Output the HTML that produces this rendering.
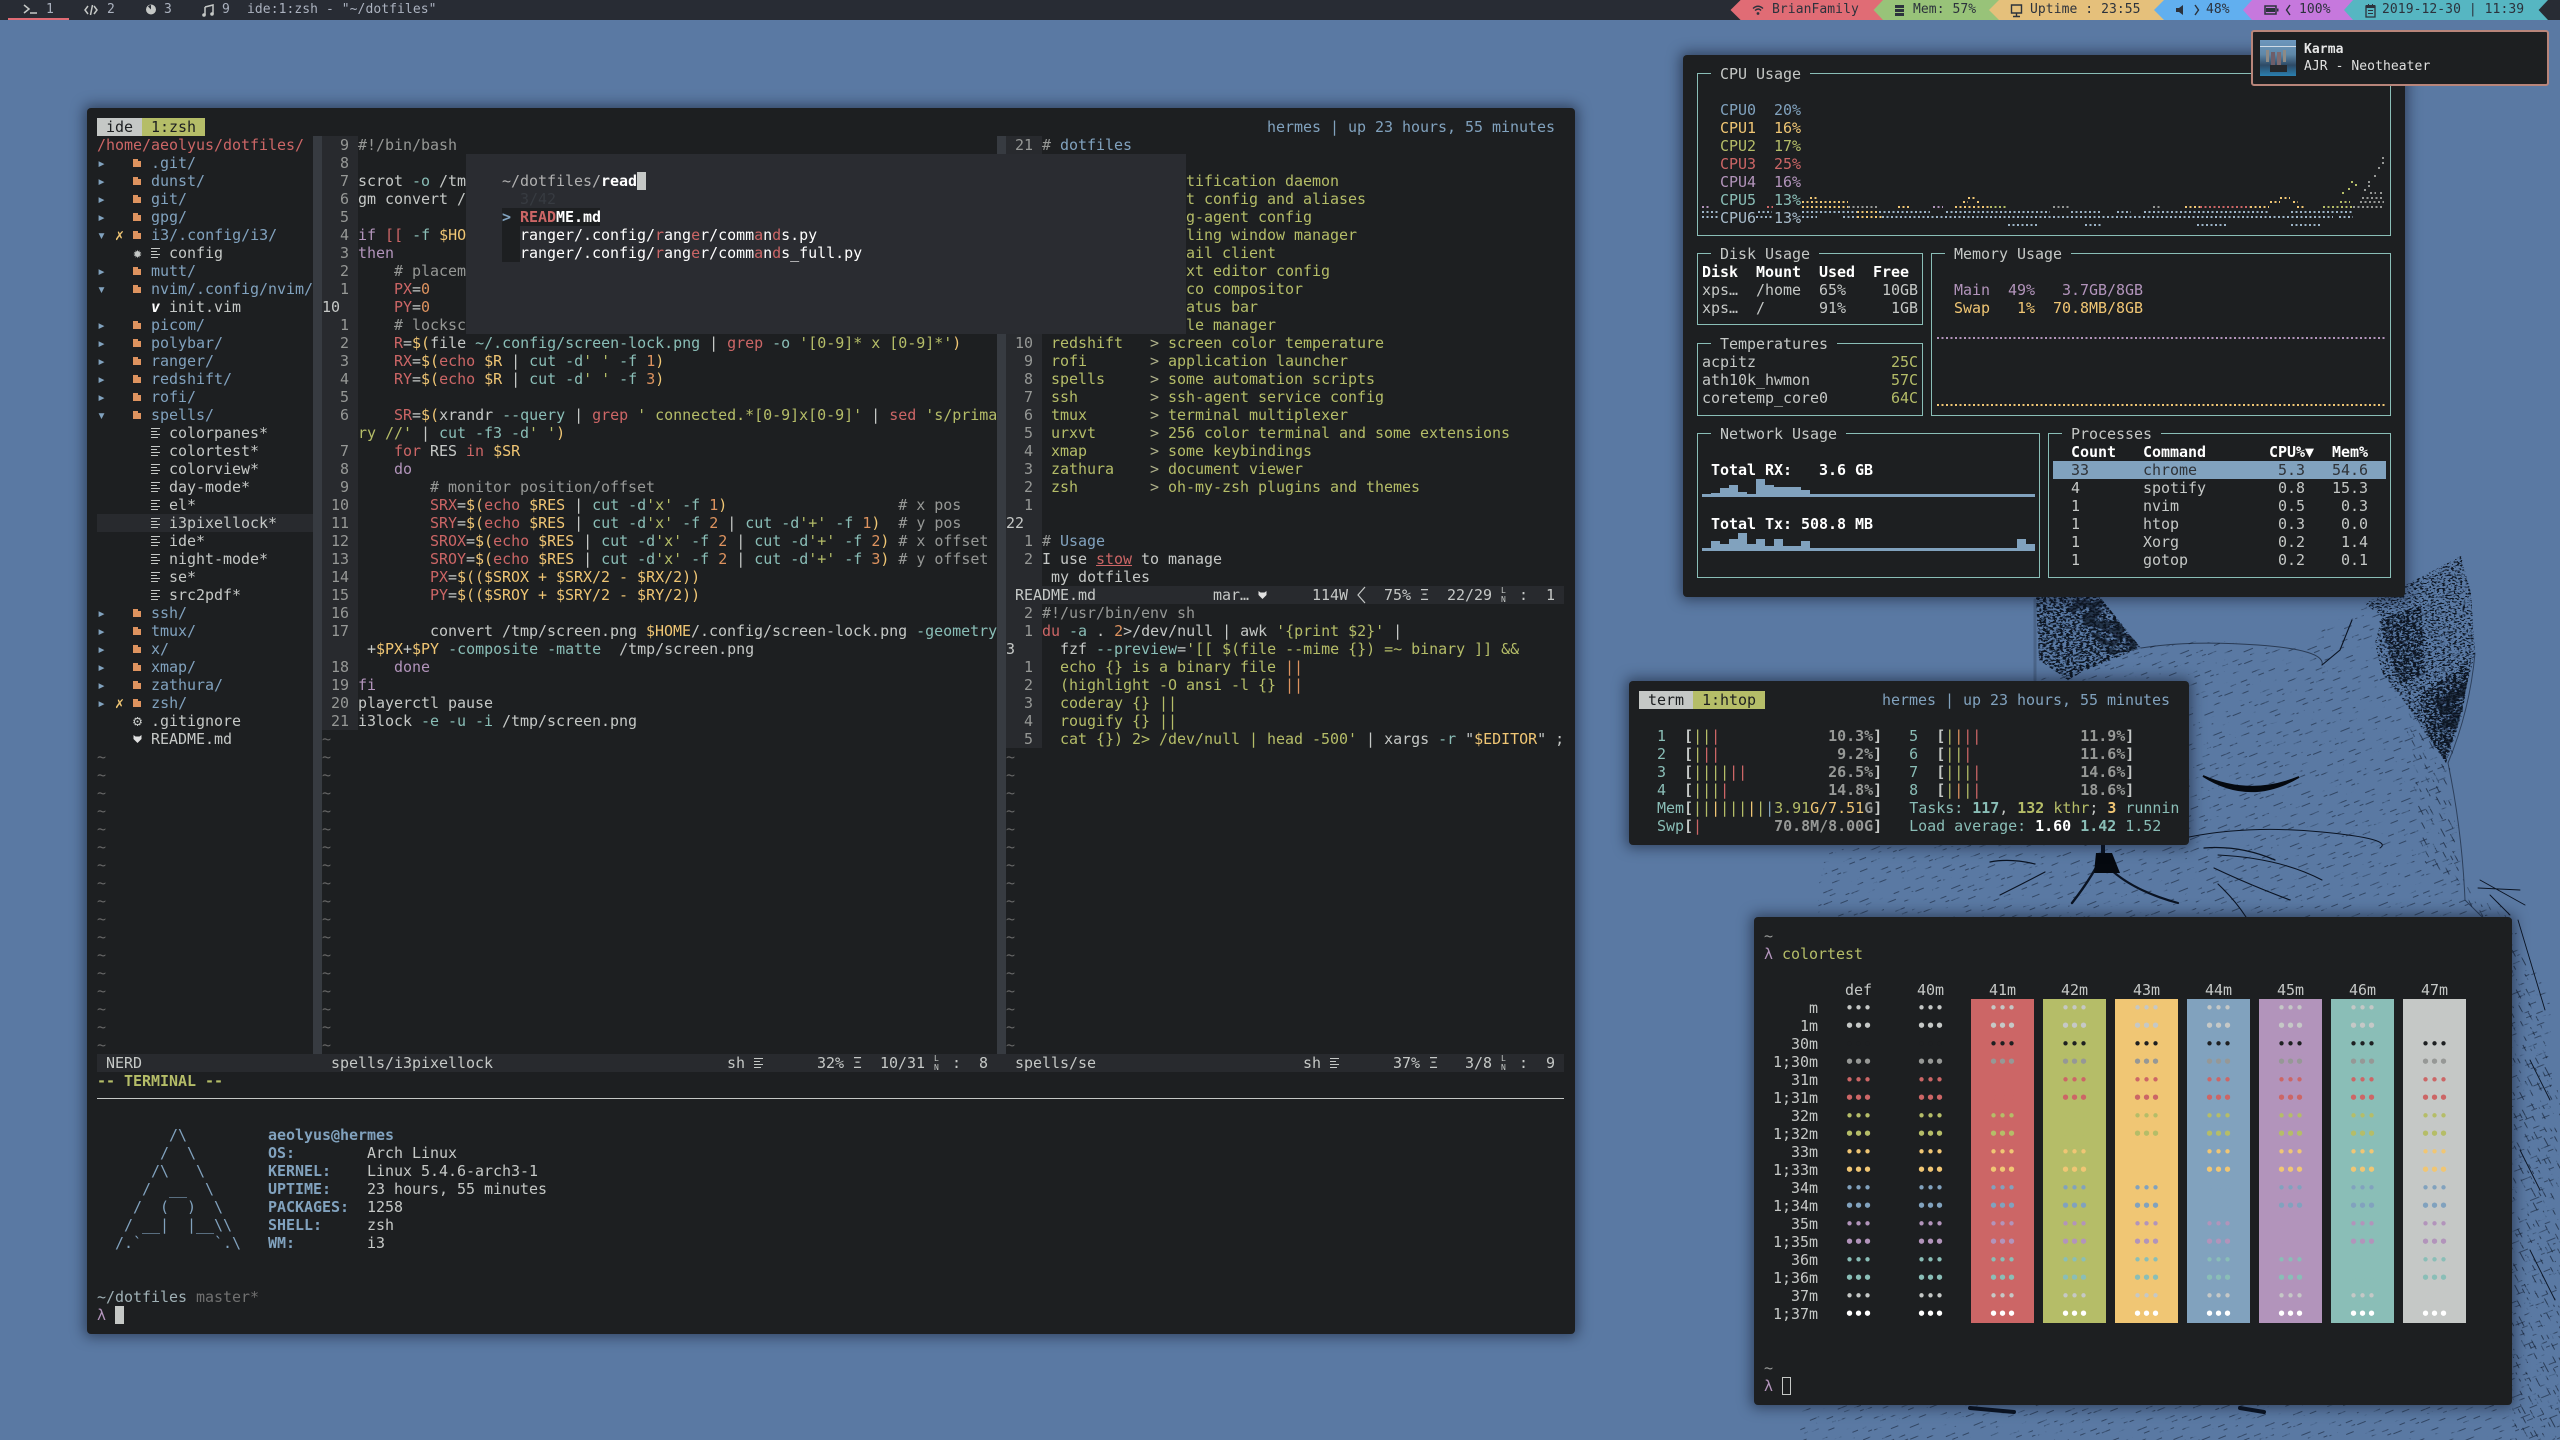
<!DOCTYPE html>
<html><head><meta charset="utf-8"><title>desktop</title>
<style>
html,body{margin:0;padding:0}
body{width:2560px;height:1440px;overflow:hidden;position:relative;background:#5a79a3;color:#c5c8c6;font:15px/18px "DejaVu Sans Mono","Liberation Mono",monospace;letter-spacing:-.03px}
pre,.t{position:absolute;margin:0;white-space:pre;font:inherit;letter-spacing:inherit}
b.t{font-weight:bold}
svg{position:absolute;left:0;top:0}
.w{position:absolute;background:#1d1f21;border-radius:4px;box-shadow:0 0 13px 3px rgba(12,18,34,.5)}
.x{position:absolute}
i{font-style:normal}
.r{color:#cc6666}.g{color:#b5bd68}.y{color:#f0c674}.b{color:#81a2be}.m{color:#b294bb}.c{color:#8abeb7}.o{color:#de935f}.k{color:#969896}.W{color:#fff}.l{color:#c5c8c6}.e{color:#1d1f21}
b{font-weight:bold}
.f{display:inline-block;width:9px;height:18px;vertical-align:top;background:linear-gradient(#de935f,#de935f) 0 5px/5px 2px no-repeat,linear-gradient(#de935f,#de935f) 0 7px/8px 6px no-repeat}
.fi{display:inline-block;width:9px;height:18px;vertical-align:top;background:linear-gradient(#c5c8c6,#c5c8c6) 0 4px/9px 1px no-repeat,linear-gradient(#c5c8c6,#c5c8c6) 0 7px/6px 1px no-repeat,linear-gradient(#c5c8c6,#c5c8c6) 0 10px/9px 1px no-repeat,linear-gradient(#c5c8c6,#c5c8c6) 0 13px/7px 1px no-repeat}
.s{display:inline-block;width:9px;text-align:center;line-height:18px;height:18px;vertical-align:top}
.d{color:#81a2be}
.tl{color:#666}
.ln{font-size:8px;line-height:9px}
.bx{position:absolute;border:1px solid #8abeb7;box-sizing:border-box}
.bt{position:absolute;background:#1d1f21;white-space:pre}
.bar{font-size:13px;line-height:20px;letter-spacing:.07px;color:#abb2bf}
.pb{font-size:13px;line-height:20px;letter-spacing:.07px;color:#2c323c}
</style></head><body>

<svg width="2560" height="1440" viewBox="0 0 2560 1440">
<defs>
<filter id="st" x="0" y="0" width="100%" height="100%"><feTurbulence type="fractalNoise" baseFrequency=".3 .55" numOctaves="2" seed="4"/><feColorMatrix values="0 0 0 0 0 0 0 0 0 0 0 0 0 0 0 9 0 0 0 -4.100"/><feComposite in="SourceGraphic" operator="in"/></filter>
<filter id="st3" x="0" y="0" width="100%" height="100%"><feTurbulence type="fractalNoise" baseFrequency=".35 .6" numOctaves="2" seed="11"/><feColorMatrix values="0 0 0 0 0 0 0 0 0 0 0 0 0 0 0 10 0 0 0 -5.300"/><feComposite in="SourceGraphic" operator="in"/></filter>
<filter id="st2" x="0" y="0" width="100%" height="100%"><feTurbulence type="fractalNoise" baseFrequency=".07 .14" numOctaves="3" seed="9"/><feColorMatrix values="0 0 0 0 0 0 0 0 0 0 0 0 0 0 0 7 0 0 0 -2.800"/><feComposite in="SourceGraphic" operator="in"/></filter>
<pattern id="h1" width="30" height="22" patternUnits="userSpaceOnUse" patternTransform="rotate(-22)">
<path d="M2 4h9M18 9h8M6 15h10M22 20h7M26 3h4M11 20h6" stroke="#0b1526" stroke-width=".9" fill="none"/></pattern>
<pattern id="h2" width="26" height="20" patternUnits="userSpaceOnUse" patternTransform="rotate(62)">
<path d="M1 3h10M15 8h9M5 14h11M18 18h7M8 18h5" stroke="#0b1526" stroke-width="1" fill="none"/></pattern>
</defs>
<g opacity=".5" filter="url(#st2)">
<path d="M2141 648L2190 640 2300 645 2364 603 2461 560 2475 653 2446 763 2461 860 2465 900 2510 920 2550 1000 2560 1440 1800 1440 1820 860 2036 680Z" fill="url(#h1)"/>
</g>
<g opacity=".6" filter="url(#st2)">
<path d="M2400 680L2470 650 2450 770 2470 910 2525 960 2560 1100 2560 1440 2512 1440 2512 910 2420 860Z" fill="url(#h2)"/>
</g>
<g fill="#0a1322" filter="url(#st)">
<path d="M2036 597L2100 597 2141 648 2086 670 2068 680 2039 660Z"/>
<path d="M2379 620L2421 605 2425 673 2398 685Z"/>
<path d="M2420 695L2471 660 2462 715 2446 763 2428 735Z"/>
</g>
<g fill="#0a1322" filter="url(#st3)">
<path d="M2364 603L2396 590 2461 556 2471 593 2475 653 2461 710 2446 763 2425 733 2403 700 2382 673 2375 643 2382 617Z"/>
</g>
<g fill="#0a1322" opacity=".7" filter="url(#st2)">
<path d="M2060 600L2100 600 2141 648 2110 655Z"/>
<path d="M2436 700L2468 680 2458 725 2448 750Z"/>
</g>
<g fill="none" stroke="#0a1322" stroke-linecap="round">
<path d="M2141 648Q2190 640 2258 645T2322 665" stroke-width="1" opacity=".6"/>
<path d="M2322 665L2340 650 2352 620" stroke-width="1.100"/>
<path d="M2475 653Q2470 710 2448 763 2462 830 2465 900 2490 925 2512 945" stroke-width="1" opacity=".55"/>
<path d="M2035 600V680" stroke="#4a6488" stroke-width="3"/>
<path d="M2189 837Q2250 825 2322 832T2380 848" stroke-width="1"/>
<path d="M2204 848Q2240 845 2275 860" stroke-width="1.300"/>
<path d="M2218 855Q2280 858 2322 880" stroke-width="1"/>
<path d="M2214 868Q2250 885 2290 900" stroke-width="1.100"/>
<path d="M2218 884Q2235 900 2246 917" stroke-width="1.100"/>
<path d="M2103 845V858" stroke-width="4"/>
<path d="M2100 860Q2090 880 2072 903" stroke-width="2.400"/>
<path d="M2106 865Q2130 890 2178 903" stroke-width="2.200"/>
<path d="M1990 862Q2010 858 2035 864" stroke-width="1.200"/>
<path d="M2000 895Q2020 885 2045 872" stroke-width="1.100"/>
<path d="M2478 888L2520 890M2480 880L2525 905M2490 895L2510 915" stroke-width=".9"/>
<path d="M2518 920L2545 1010M2530 1060L2550 1100M2520 1150L2540 1190M2530 1250L2555 1300" stroke-width=".9"/>
<path d="M1970 1408L2014 1412M2240 1408L2264 1412" stroke-width="4"/>
</g>
<path d="M2203 776Q2250 806 2299 777 2250 797 2203 776Z" fill="#05090f" stroke="#05090f" stroke-width="1.800"/>
<path d="M2096 853L2112 853 2120 873 2094 873Z" fill="#05090f"/>
</svg>

<!-- top bar -->
<div class="x" style="left:0;top:0;width:2560px;height:20px;background:#282c34"></div>
<div class="x" style="left:8px;top:18px;width:61px;height:2px;background:#e06c75"></div>
<svg width="2560" height="20" viewBox="0 0 2560 20">
<g fill="none" stroke="#c5c8c6" stroke-width="1.5">
<path d="M24 5l5 4-5 4M30 13h7"/>
<path d="M88 6l-3 4 3 4M94 6l3 4-3 4M92.500 5l-2 10"/>
</g>
<circle cx="151" cy="9.500" r="5" fill="#c5c8c6"/><path d="M151 9.500V5a4 4 0 0 0-3 1.500z" fill="#282c34"/>
<path d="M205 7l8-2v9M205 7v8" stroke="#c5c8c6" stroke-width="1.500" fill="none"/><circle cx="204" cy="15" r="1.800" fill="#c5c8c6"/><circle cx="212" cy="14" r="1.800" fill="#c5c8c6"/>
<polygon points="1740.600,0 1890,0 1890,20 1740.600,20 1730.500,10" fill="#e06c75"/>
<polygon points="1883,0 2005,0 2005,20 1883,20 1873.600,10" fill="#98c379"/>
<polygon points="1999,0 2170,0 2170,20 1999,20 1989,10" fill="#e5c07b"/>
<polygon points="2164,0 2260,0 2260,20 2164,20 2154,10" fill="#61afef"/>
<polygon points="2252,0 2360,0 2360,20 2252,20 2243,10" fill="#c678dd"/>
<polygon points="2353,0 2555,0 2555,20 2353,20 2344,10" fill="#56b6c2"/>
<polygon points="2548,0 2560,0 2560,20 2548,20 2538.600,10" fill="#282c34"/>
<g fill="none" stroke="#2c323c" stroke-width="1.400">
<path d="M1753 8.500q5-4.500 10 0M1755 10.500q3.500-3 6 0"/>
<path d="M2011.500 5h10v8h-10zM2016.500 13v3M2013 16.500h7"/>
<path d="M2195 5l3.500 5-3.500 5M2290 5l-3.500 5 3.500 5"/>
</g>
<circle cx="1758" cy="13.500" r="1.400" fill="#2c323c"/>
<path d="M1895 5h9v3h-9zM1895 9h9v3h-9zM1895 13h9v3h-9z" fill="#2c323c"/>
<path d="M2176 8h3l4-3v10l-4-3h-3z" fill="#2c323c"/>
<path d="M2265 6h11v8h-11z" fill="none" stroke="#2c323c" stroke-width="1.500"/><path d="M2266 8h9v4h-9zM2277 8.500h1.500v3h-1.500z" fill="#2c323c"/>
<path d="M2366 6h9v11h-9z" fill="none" stroke="#2c323c" stroke-width="1.300"/><path d="M2366 5h9v3h-9zM2368 4h1v2h-1zM2372 4h1v2h-1zM2368 10h5v1h-5zM2368 13h5v1h-5z" fill="#2c323c"/>
</svg>
<span class="t bar" style="left:46px;top:0">1</span>
<span class="t bar" style="left:107px;top:0">2</span>
<span class="t bar" style="left:164px;top:0">3</span>
<span class="t bar" style="left:222px;top:0">9</span>
<span class="t bar" style="left:247px;top:0">ide:1:zsh - "~/dotfiles"</span>
<span class="t pb" style="left:1772px;top:0">BrianFamily</span>
<span class="t pb" style="left:1913px;top:0">Mem: 57%</span>
<span class="t pb" style="left:2030px;top:0">Uptime : 23:55</span>
<span class="t pb" style="left:2206px;top:0">48%</span>
<span class="t pb" style="left:2299px;top:0">100%</span>
<span class="t pb" style="left:2382px;top:0">2019-12-30 | 11:39</span>

<!-- main window -->
<div class="w" style="left:87px;top:108px;width:1488px;height:1226px"></div>
<div class="x" style="left:97px;top:514px;width:216px;height:18px;background:#282a2e"></div>
<div class="x" style="left:313px;top:136px;width:9px;height:918px;background:#373b41"></div>
<div class="x" style="left:997px;top:136px;width:9px;height:918px;background:#373b41"></div>
<div class="x" style="left:322px;top:136px;width:36px;height:594px;background:#282a2e"></div>
<div class="x" style="left:1006px;top:136px;width:36px;height:612px;background:#282a2e"></div>
<div class="x" style="left:1006px;top:586px;width:558px;height:18px;background:#282a2e"></div>
<div class="x" style="left:97px;top:1054px;width:1467px;height:18px;background:#282a2e"></div>
<div class="x" style="left:97px;top:1098px;width:1467px;height:1px;background:#c5c8c6"></div>
<div class="x" style="left:97px;top:118px;width:45px;height:18px;background:#c5c8c6"></div>
<div class="x" style="left:142px;top:118px;width:63px;height:18px;background:#b5bd68"></div>
<span class="t e" style="left:97px;top:118px"> ide </span>
<span class="t e" style="left:142px;top:118px"> 1:zsh </span>
<span class="t b" style="left:1267px;top:118px">hermes | up 23 hours, 55 minutes</span>

<pre style="left:97px;top:136px"><i class="r">/home/aeolyus/dotfiles/</i>
<i class="d">▸</i>   <i class="f"></i> <i class="d">.git/</i>
<i class="d">▸</i>   <i class="f"></i> <i class="d">dunst/</i>
<i class="d">▸</i>   <i class="f"></i> <i class="d">git/</i>
<i class="d">▸</i>   <i class="f"></i> <i class="d">gpg/</i>
<i class="d">▾</i> <i class="s y">✗</i> <i class="f"></i> <i class="d">i3/.config/i3/</i>
    <i class="s">✹</i> <i class="fi"></i> config
<i class="d">▸</i>   <i class="f"></i> <i class="d">mutt/</i>
<i class="d">▾</i>   <i class="f"></i> <i class="d">nvim/.config/nvim/</i>
      <b class="W" style="font-style:italic">v</b> init.vim
<i class="d">▸</i>   <i class="f"></i> <i class="d">picom/</i>
<i class="d">▸</i>   <i class="f"></i> <i class="d">polybar/</i>
<i class="d">▸</i>   <i class="f"></i> <i class="d">ranger/</i>
<i class="d">▸</i>   <i class="f"></i> <i class="d">redshift/</i>
<i class="d">▸</i>   <i class="f"></i> <i class="d">rofi/</i>
<i class="d">▾</i>   <i class="f"></i> <i class="d">spells/</i>
      <i class="fi"></i> colorpanes*
      <i class="fi"></i> colortest*
      <i class="fi"></i> colorview*
      <i class="fi"></i> day-mode*
      <i class="fi"></i> el*
      <i class="fi"></i> i3pixellock*
      <i class="fi"></i> ide*
      <i class="fi"></i> night-mode*
      <i class="fi"></i> se*
      <i class="fi"></i> src2pdf*
<i class="d">▸</i>   <i class="f"></i> <i class="d">ssh/</i>
<i class="d">▸</i>   <i class="f"></i> <i class="d">tmux/</i>
<i class="d">▸</i>   <i class="f"></i> <i class="d">x/</i>
<i class="d">▸</i>   <i class="f"></i> <i class="d">xmap/</i>
<i class="d">▸</i>   <i class="f"></i> <i class="d">zathura/</i>
<i class="d">▸</i> <i class="s y">✗</i> <i class="f"></i> <i class="d">zsh/</i>
    <i class="s">⚙</i> .gitignore
      README.md
<i class="tl">~
~
~
~
~
~
~
~
~
~
~
~
~
~
~
~
~</i></pre>
<svg width="2560" height="1440" viewBox="0 0 2560 1440"><path d="M133.500 735l2 1.500h4l2-1.500v4l-4 4-4-4zM1258.500 591l2 1.500h4l2-1.500v4l-4 4-4-4z" fill="#e0e0e0"/></svg>

<pre class="k" style="left:322px;top:136px">  9
  8
  7
  6
  5
  4
  3
  2
  1
<i class="l">10</i>
  1
  2
  3
  4
  5
  6

  7
  8
  9
 10
 11
 12
 13
 14
 15
 16
 17

 18
 19
 20
 21
<i class="tl">~
~
~
~
~
~
~
~
~
~
~
~
~
~
~
~
~
~</i></pre>

<pre style="left:358px;top:136px"><i class="k">#!/bin/bash</i>

scrot <i class="c">-o</i> /tm
gm convert /

<i class="m">if</i> <i class="r">[[</i> <i class="c">-f</i> <i class="y">$HO</i>
<i class="m">then</i>
    <i class="k"># placem</i>
    <i class="r">PX</i>=<i class="o">0</i>
    <i class="r">PY</i>=<i class="o">0</i>
    <i class="k"># locksc</i>
    <i class="r">R</i>=<i class="y">$(</i>file <i class="c">~/.config/screen-lock.png</i> | <i class="r">grep</i> <i class="c">-o</i> <i class="g">'[0-9]* x [0-9]*'</i><i class="y">)</i>
    <i class="r">RX</i>=<i class="y">$(</i><i class="r">echo</i> <i class="y">$R</i> | <i class="c">cut -d</i><i class="g">' '</i> <i class="c">-f</i> <i class="o">1</i><i class="y">)</i>
    <i class="r">RY</i>=<i class="y">$(</i><i class="r">echo</i> <i class="y">$R</i> | <i class="c">cut -d</i><i class="g">' '</i> <i class="c">-f</i> <i class="o">3</i><i class="y">)</i>

    <i class="r">SR</i>=<i class="y">$(</i>xrandr <i class="c">--query</i> | <i class="r">grep</i> <i class="g">' connected.*[0-9]x[0-9]'</i> | <i class="r">sed</i> <i class="g">'s/prima</i>
<i class="g">ry //'</i> | <i class="c">cut -f3 -d</i><i class="g">' '</i><i class="y">)</i>
    <i class="r">for</i> RES <i class="r">in</i> <i class="y">$SR</i>
    <i class="m">do</i>
        <i class="k"># monitor position/offset</i>
        <i class="r">SRX</i>=<i class="y">$(</i><i class="r">echo</i> <i class="y">$RES</i> | <i class="c">cut -d</i><i class="g">'x'</i> <i class="c">-f</i> <i class="o">1</i><i class="y">)</i>                   <i class="k"># x pos</i>
        <i class="r">SRY</i>=<i class="y">$(</i><i class="r">echo</i> <i class="y">$RES</i> | <i class="c">cut -d</i><i class="g">'x'</i> <i class="c">-f</i> <i class="o">2</i> | <i class="c">cut -d</i><i class="g">'+'</i> <i class="c">-f</i> <i class="o">1</i><i class="y">)</i>  <i class="k"># y pos</i>
        <i class="r">SROX</i>=<i class="y">$(</i><i class="r">echo</i> <i class="y">$RES</i> | <i class="c">cut -d</i><i class="g">'x'</i> <i class="c">-f</i> <i class="o">2</i> | <i class="c">cut -d</i><i class="g">'+'</i> <i class="c">-f</i> <i class="o">2</i><i class="y">)</i> <i class="k"># x offset</i>
        <i class="r">SROY</i>=<i class="y">$(</i><i class="r">echo</i> <i class="y">$RES</i> | <i class="c">cut -d</i><i class="g">'x'</i> <i class="c">-f</i> <i class="o">2</i> | <i class="c">cut -d</i><i class="g">'+'</i> <i class="c">-f</i> <i class="o">3</i><i class="y">)</i> <i class="k"># y offset</i>
        <i class="r">PX</i>=<i class="y">$(($SROX + $SRX/2 - $RX/2))</i>
        <i class="r">PY</i>=<i class="y">$(($SROY + $SRY/2 - $RY/2))</i>

        convert /tmp/screen.png <i class="y">$HOME</i>/.config/screen-lock.png <i class="c">-geometry</i>
 +<i class="y">$PX</i>+<i class="y">$PY</i> <i class="c">-composite -matte</i>  /tmp/screen.png
    <i class="m">done</i>
<i class="m">fi</i>
playerctl pause
i3lock <i class="c">-e -u -i</i> /tmp/screen.png</pre>

<pre class="k" style="left:1006px;top:136px"> 21










 10
  9
  8
  7
  6
  5
  4
  3
  2
  1
<i class="l">22</i>
  1
  2


  2
  1
<i class="l">3</i>
  1
  2
  3
  4
  5
<i class="tl">~
~
~
~
~
~
~
~
~
~
~
~
~
~
~
~
~</i></pre>

<pre class="g" style="left:1042px;top:136px"><i class="k">#</i> <i class="b">dotfiles</i>

                tification daemon
                t config and aliases
                g-agent config
                ling window manager
                ail client
                xt editor config
                co compositor
                atus bar
                le manager
 redshift   <i style="color:#aeb08a">&gt;</i> screen color temperature
 rofi       <i style="color:#aeb08a">&gt;</i> application launcher
 spells     <i style="color:#aeb08a">&gt;</i> some automation scripts
 ssh        <i style="color:#aeb08a">&gt;</i> ssh-agent service config
 tmux       <i style="color:#aeb08a">&gt;</i> terminal multiplexer
 urxvt      <i style="color:#aeb08a">&gt;</i> 256 color terminal and some extensions
 xmap       <i style="color:#aeb08a">&gt;</i> some keybindings
 zathura    <i style="color:#aeb08a">&gt;</i> document viewer
 zsh        <i style="color:#aeb08a">&gt;</i> oh-my-zsh plugins and themes


<i class="k">#</i> <i class="b">Usage</i>
<i class="l">I use <i class="r" style="text-decoration:underline">stow</i> to manage</i>
<i class="l"> my dotfiles</i>

<i class="k">#!/usr/bin/env sh</i>
<i class="r">du</i> <i class="c">-a</i> <i class="l">.</i> <i class="o">2</i><i class="l">&gt;/dev/null | awk</i> <i class="g">'{print $2}'</i> <i class="l">|</i>
  <i class="l">fzf</i> <i class="c">--preview</i><i class="l">=</i>'[[ $(file --mime {}) =~ binary ]] &amp;&amp;
  echo {} is a binary file <i class="o">||</i>
  (highlight -O ansi -l {} <i class="o">||</i>
  coderay {} ||
  rougify {} ||
  cat {}) 2&gt; /dev/null | head -500' <i class="l">|</i> <i class="l">xargs</i> <i class="c">-r</i> <i class="l">"</i><i class="y">$EDITOR</i><i class="l">" ;</i></pre>

<!-- fzf popup -->
<div class="x" style="left:466px;top:154px;width:720px;height:180px;background:#2a2c31"></div>
<div class="x" style="left:502px;top:208px;width:18px;height:54px;background:#1d1f21"></div>
<div class="x" style="left:502px;top:208px;width:98px;height:18px;background:#1d1f21"></div>
<div class="x" style="left:637px;top:172px;width:9px;height:18px;background:#c5c8c6"></div>
<pre style="left:502px;top:172px;color:#b0b0b0">~/dotfiles/<b class="W">read</b>
  <i style="color:#373b41">3/42</i>
<b class="b">&gt;</b> <b class="r">READ</b><b class="W">ME.md</b>
  <i class="W">ranger/.config/<i class="r">r</i>ang<i class="r">e</i>r/comm<i class="r">a</i>n<i class="r">d</i>s.py</i>
  <i class="W">ranger/.config/<i class="r">r</i>ang<i class="r">e</i>r/comm<i class="r">a</i>n<i class="r">d</i>s_full.py</i></pre>

<!-- statuslines -->
<span class="t" style="left:1015px;top:586px">README.md</span>
<span class="t" style="left:1213px;top:586px">mar…</span>
<span class="t" style="left:1312px;top:586px">114W</span>
<svg width="2560" height="1440" viewBox="0 0 2560 1440"><path d="M1365 587l-7 8 7 8" fill="none" stroke="#c5c8c6" stroke-width="1.200"/></svg>
<span class="t" style="left:1384px;top:586px">75%</span>
<span class="t" style="left:1420px;top:586px">Ξ</span>
<span class="t" style="left:1447px;top:586px">22/29</span>
<span class="t ln" style="left:1501px;top:586px">L
N</span>
<span class="t" style="left:1519px;top:586px">:</span>
<span class="t" style="left:1546px;top:586px">1</span>

<span class="t" style="left:106px;top:1054px">NERD</span>
<span class="t" style="left:331px;top:1054px">spells/i3pixellock</span>
<span class="t" style="left:727px;top:1054px">sh</span>
<i class="fi x" style="left:754px;top:1054px"></i>
<span class="t" style="left:817px;top:1054px">32%</span>
<span class="t" style="left:853px;top:1054px">Ξ</span>
<span class="t" style="left:880px;top:1054px">10/31</span>
<span class="t ln" style="left:934px;top:1054px">L
N</span>
<span class="t" style="left:952px;top:1054px">:</span>
<span class="t" style="left:979px;top:1054px">8</span>
<span class="t" style="left:1015px;top:1054px">spells/se</span>
<span class="t" style="left:1303px;top:1054px">sh</span>
<i class="fi x" style="left:1330px;top:1054px"></i>
<span class="t" style="left:1393px;top:1054px">37%</span>
<span class="t" style="left:1429px;top:1054px">Ξ</span>
<span class="t" style="left:1465px;top:1054px">3/8</span>
<span class="t ln" style="left:1501px;top:1054px">L
N</span>
<span class="t" style="left:1519px;top:1054px">:</span>
<span class="t" style="left:1546px;top:1054px">9</span>
<b class="t g" style="left:97px;top:1072px">-- TERMINAL --</b>

<pre style="left:115px;top:1126px"><i class="b">      /\
     /  \
    /\   \
   /  __  \
  /  (  )  \
 / __|  |__\\
/.`        `.\</i></pre>
<pre style="left:268px;top:1126px"><b class="b">aeolyus@hermes</b>
<b class="b">OS:</b>        Arch Linux
<b class="b">KERNEL:</b>    Linux 5.4.6-arch3-1
<b class="b">UPTIME:</b>    23 hours, 55 minutes
<b class="b">PACKAGES:</b>  1258
<b class="b">SHELL:</b>     zsh
<b class="b">WM:</b>        i3</pre>
<pre style="left:97px;top:1288px"><i style="color:#9fb0b5">~/dotfiles</i> <i style="color:#707070">master*</i>
<i class="m">λ</i></pre>
<div class="x" style="left:115px;top:1306px;width:9px;height:18px;background:#c5c8c6"></div>

<!-- gotop -->
<div class="w" style="left:1683px;top:55px;width:722px;height:542px"></div>
<div class="bx" style="left:1697px;top:73px;width:694px;height:163px"></div>
<div class="bx" style="left:1697px;top:253px;width:226px;height:72px"></div>
<div class="bx" style="left:1931px;top:253px;width:460px;height:163px"></div>
<div class="bx" style="left:1697px;top:343px;width:226px;height:73px"></div>
<div class="bx" style="left:1697px;top:433px;width:343px;height:145px"></div>
<div class="bx" style="left:2048px;top:433px;width:343px;height:145px"></div>
<span class="bt" style="left:1711px;top:65px"> CPU Usage </span>
<span class="bt" style="left:1711px;top:245px"> Disk Usage </span>
<span class="bt" style="left:1945px;top:245px"> Memory Usage </span>
<span class="bt" style="left:1711px;top:335px"> Temperatures </span>
<span class="bt" style="left:1711px;top:425px"> Network Usage </span>
<span class="bt" style="left:2062px;top:425px"> Processes </span>

<svg width="2560" height="1440" viewBox="0 0 2560 1440">
<g fill="none" stroke-width="2" stroke-dasharray="2 2.500">
<g stroke="#9db4c8">
<path d="M1702 212H1719M1758 212H1772M1802 212H1857M1879 212H1930M1946 212H2050M2071 212H2101M2117 212H2131M2144 212H2269M2291 212H2353"/>
<path d="M1702 217H1719M1756 217H1772M1802 217H1817M1843 217H1857M1882 217H2333M2339 217H2353"/>
<path d="M2008 225H2037M2085 225H2101M2197 225H2227M2291 225H2322"/>
</g>
<path stroke="#f0c674" d="M1857 212H1879M1857 217H1882M1802 207H1848M1898 207H1911M1955 207H1990M2185 207H2200M2250 207H2269M2297 207H2305M1802 202H1848M1963 202H1968M1977 202H1981M2270 202H2280M2293 202H2298M1810 198H1818M1968 198H1976M2280 198H2290"/>
<path stroke="#b294bb" d="M1702 207H1711M1933 207H1943"/>
<path stroke="#cc6666" d="M1767 207H1773M2200 207H2250"/>
<path stroke="#b5bd68" d="M1990 207H2007M2323 207H2353M2340 202H2350"/>
<path stroke="#969896" d="M1848 207H1879M2053 207H2070M2153 207H2162M2353 207H2384M2360 202H2384M2362 198H2384M2370 193H2376M2380 193H2384"/>
</g>
<path fill="none" stroke="#969896" stroke-width="2" d="M2382 158h2M2382 163h2M2378 168h2M2374 176h2M2368 182h2M2368 186h2M2364 190h2"/>
<path fill="none" stroke="#b5bd68" stroke-width="2" d="M2351 182h2M2355 185h2M2348 189h2M2342 193h2"/>
<path fill="none" stroke="#b294bb" stroke-width="2" stroke-dasharray="2 2.500" d="M1937 338H2386"/>
<path fill="none" stroke="#f0c674" stroke-width="2" stroke-dasharray="2 2.500" d="M1937 405H2386"/>
<path fill="#81a2be" d="M1702 497V494H1711V493H1720V488H1729V485H1738V492H1747V494H1756V479H1765V485H1774V487H1801V490H1810V494H2035V497Z"/>
<path fill="#81a2be" d="M1702 551V548H1711V541H1720V544H1729V539H1738V533H1747V544H1756V539H1765V546H1774V539H1783V546H1801V541H1810V548H2017V539H2026V544H2035V551Z"/>
</svg>

<pre style="left:1720px;top:101px"><i class="b">CPU0  20%</i>
<i class="y">CPU1  16%</i>
<i class="g">CPU2  17%</i>
<i class="r">CPU3  25%</i>
<i class="m">CPU4  16%</i>
<i class="c">CPU5  13%</i>
<i style="color:#a8bccb">CPU6  13%</i></pre>
<pre style="left:1702px;top:263px"><b class="W">Disk  Mount  Used  Free</b>
xps…  /home  65%    10GB
xps…  /      91%     1GB</pre>
<pre style="left:1954px;top:281px"><i class="m">Main  49%   3.7GB/8GB</i>
<i class="y">Swap   1%  70.8MB/8GB</i></pre>
<pre style="left:1702px;top:353px">acpitz               <i class="g">25C</i>
ath10k_hwmon         <i class="g">57C</i>
coretemp_core0       <i class="g">64C</i></pre>
<b class="t W" style="left:1711px;top:461px">Total RX:   3.6 GB</b>
<b class="t W" style="left:1711px;top:515px">Total Tx: 508.8 MB</b>
<div class="x" style="left:2053px;top:461px;width:333px;height:18px;background:#81a2be"></div>
<pre style="left:2071px;top:443px"><b class="W">Count   Command       CPU%▼  Mem%</b>
<i style="color:#2f3338">33      chrome         5.3   54.6</i>
4       spotify        0.8   15.3
1       nvim           0.5    0.3
1       htop           0.3    0.0
1       Xorg           0.2    1.4
1       gotop          0.2    0.1</pre>

<!-- notification -->
<div class="x" style="left:2251px;top:30px;width:294px;height:52px;background:#1d1f21;border:2px solid #b8857a;border-radius:3px"></div>
<svg width="2560" height="100" viewBox="0 0 2560 100">
<defs><linearGradient id="alb" x1="0" y1="0" x2="0" y2="1"><stop offset="0" stop-color="#6d97bd"/><stop offset=".4" stop-color="#5f88a8"/><stop offset=".7" stop-color="#2d4a66"/><stop offset="1" stop-color="#2a7fb0"/></linearGradient></defs>
<rect x="2260" y="40" width="36" height="36" fill="url(#alb)"/>
<rect x="2266" y="50" width="3" height="12" fill="#8d8a85"/><rect x="2271" y="52" width="4" height="14" fill="#6e5e6a"/><rect x="2277" y="52" width="4" height="14" fill="#7d6a70"/><rect x="2283" y="50" width="3" height="12" fill="#8d8a85"/><rect x="2270" y="65" width="17" height="7" fill="#25282c"/>
<rect x="2260" y="46" width="36" height="1" fill="#cfdbe6"/>
</svg>
<b class="t" style="left:2304px;top:40px;font-size:13px;line-height:20px;letter-spacing:.07px;color:#e6e6e6">Karma</b>
<span class="t" style="left:2304px;top:57px;font-size:13px;line-height:20px;letter-spacing:.07px;color:#e0e0e0">AJR - Neotheater</span>

<!-- htop -->
<div class="w" style="left:1629px;top:681px;width:560px;height:164px"></div>
<div class="x" style="left:1639px;top:691px;width:54px;height:18px;background:#c5c8c6"></div>
<div class="x" style="left:1693px;top:691px;width:72px;height:18px;background:#b5bd68"></div>
<span class="t e" style="left:1639px;top:691px"> term </span>
<span class="t e" style="left:1693px;top:691px"> 1:htop </span>
<span class="t b" style="left:1882px;top:691px">hermes | up 23 hours, 55 minutes</span>
<pre style="left:1639px;top:727px">  <i class="c">1</i>  <b>[</b><i class="g">||</i><i class="r">|</i>            <b class="k">10.3%</b><b>]</b>   <i class="c">5</i>  <b>[</b><i class="g">|</i><i class="o">|</i><i class="r">||</i>           <b class="k">11.9%</b><b>]</b>
  <i class="c">2</i>  <b>[</b><i class="g">|</i><i class="r">||</i>             <b class="k">9.2%</b><b>]</b>   <i class="c">6</i>  <b>[</b><i class="g">||</i><i class="r">|</i>            <b class="k">11.6%</b><b>]</b>
  <i class="c">3</i>  <b>[</b><i class="g">||||</i><i class="r">||</i>         <b class="k">26.5%</b><b>]</b>   <i class="c">7</i>  <b>[</b><i class="g">|||</i><i class="r">|</i>           <b class="k">14.6%</b><b>]</b>
  <i class="c">4</i>  <b>[</b><i class="g">|||</i><i class="r">|</i>           <b class="k">14.8%</b><b>]</b>   <i class="c">8</i>  <b>[</b><i class="g">|</i><i class="o">|</i><i class="g">|</i><i class="r">|</i>           <b class="k">18.6%</b><b>]</b>
  <i class="c">Mem</i><b>[</b><i class="g">||</i><i class="y">|</i><i class="g">|||</i><i class="y">|</i><i class="g">|</i><i class="b">|</i><i class="g">3.91</i><i class="y">G/7.51</i><b class="k">G</b><b>]</b>   <i class="c">Tasks:</i> <b class="c">117</b>, <b class="g">132</b> <i class="g">kthr</i>; <b class="y">3</b> <i class="c">runnin</i>
  <i class="c">Swp</i><b>[</b><i class="r">|</i>        <b class="k">70.8M/8.00G</b><b>]</b>   <i class="c">Load average:</i> <b class="W">1.60</b> <b class="c">1.42</b> <i class="c">1.52</i></pre>

<!-- colortest -->
<div class="w" style="left:1754px;top:917px;width:758px;height:488px"></div>
<div class="x" style="left:1971px;top:999px;width:63px;height:324px;background:#cc6666"></div>
<div class="x" style="left:2043px;top:999px;width:63px;height:324px;background:#b5bd68"></div>
<div class="x" style="left:2115px;top:999px;width:63px;height:324px;background:#f0c674"></div>
<div class="x" style="left:2187px;top:999px;width:63px;height:324px;background:#81a2be"></div>
<div class="x" style="left:2259px;top:999px;width:63px;height:324px;background:#b294bb"></div>
<div class="x" style="left:2331px;top:999px;width:63px;height:324px;background:#8abeb7"></div>
<div class="x" style="left:2403px;top:999px;width:63px;height:324px;background:#c5c8c6"></div>
<pre style="left:1764px;top:927px"><i class="k">~</i>
<i class="m">λ</i> <i class="g">colortest</i>


     m
    1m
   30m
 1;30m
   31m
 1;31m
   32m
 1;32m
   33m
 1;33m
   34m
 1;34m
   35m
 1;35m
   36m
 1;36m
   37m
 1;37m


<i class="k">~</i>
<i class="m">λ</i></pre>
<span class="t" style="left:1845px;top:981px">def     40m     41m     42m     43m     44m     45m     46m     47m</span>
<pre style="left:1845px;top:999px"><i class="l">•••     •••     •••     •••     •••     •••     •••     •••     •••</i>
<b class="l">•••     •••     •••     •••     •••     •••     •••     •••     •••</b>
<i class="e">•••     •••     •••     •••     •••     •••     •••     •••     •••</i>
<b class="k">•••     •••     •••     •••     •••     •••     •••     •••     •••</b>
<i class="r">•••     •••     •••     •••     •••     •••     •••     •••     •••</i>
<b class="r">•••     •••     •••     •••     •••     •••     •••     •••     •••</b>
<i class="g">•••     •••     •••     •••     •••     •••     •••     •••     •••</i>
<b class="g">•••     •••     •••     •••     •••     •••     •••     •••     •••</b>
<i class="y">•••     •••     •••     •••     •••     •••     •••     •••     •••</i>
<b class="y">•••     •••     •••     •••     •••     •••     •••     •••     •••</b>
<i class="b">•••     •••     •••     •••     •••     •••     •••     •••     •••</i>
<b class="b">•••     •••     •••     •••     •••     •••     •••     •••     •••</b>
<i class="m">•••     •••     •••     •••     •••     •••     •••     •••     •••</i>
<b class="m">•••     •••     •••     •••     •••     •••     •••     •••     •••</b>
<i class="c">•••     •••     •••     •••     •••     •••     •••     •••     •••</i>
<b class="c">•••     •••     •••     •••     •••     •••     •••     •••     •••</b>
<i class="l">•••     •••     •••     •••     •••     •••     •••     •••     •••</i>
<b class="W">•••     •••     •••     •••     •••     •••     •••     •••     •••</b></pre>
<div class="x" style="left:1782px;top:1377px;width:7px;height:16px;border:1px solid #c5c8c6"></div>
</body></html>
